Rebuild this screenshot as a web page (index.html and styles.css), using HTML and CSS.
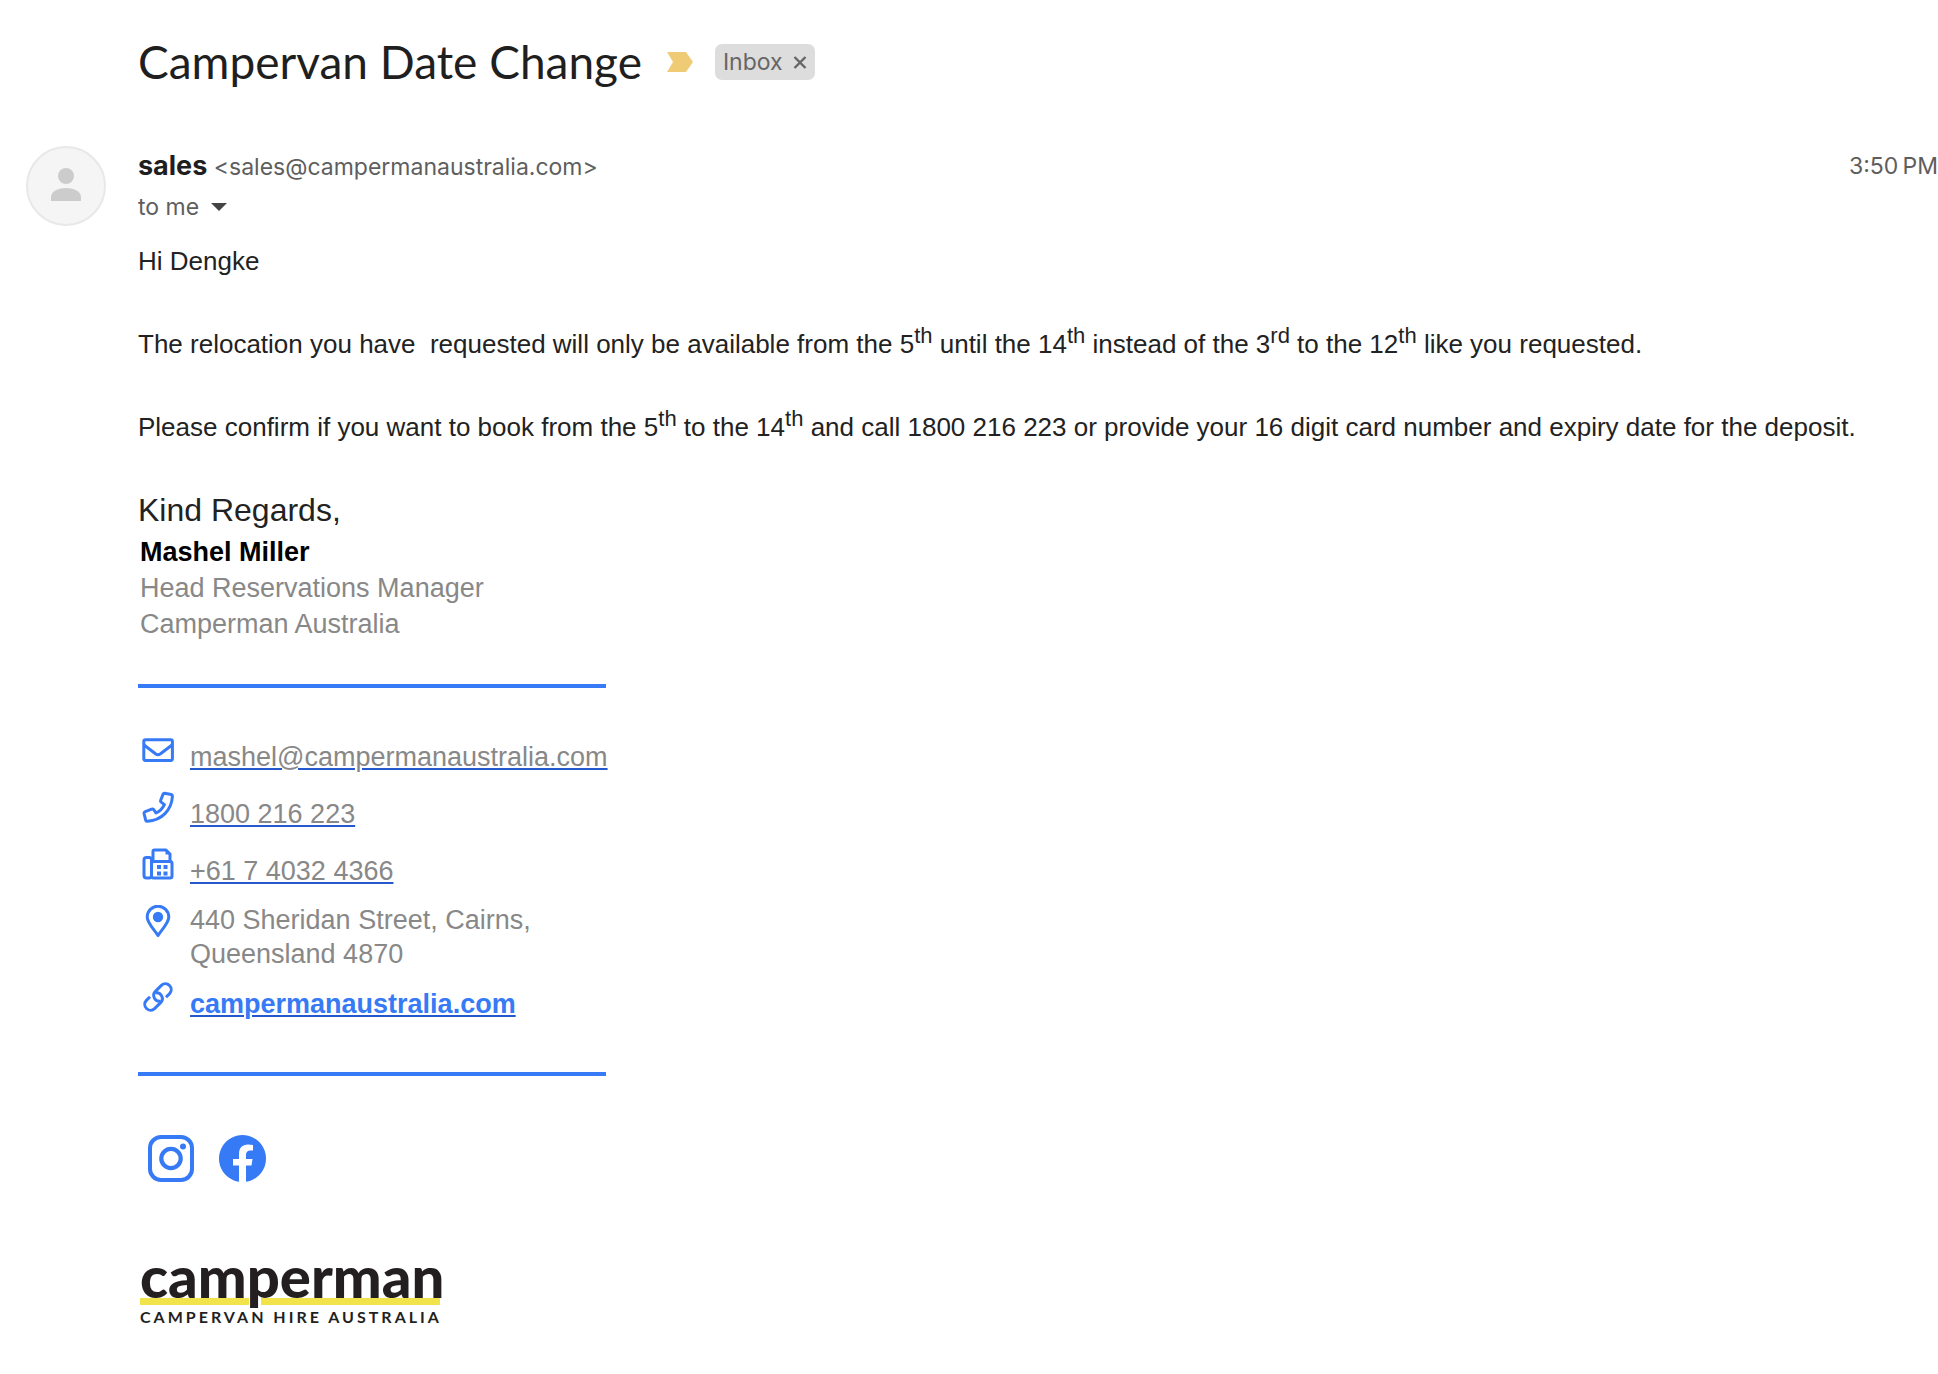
FILE: index.html
```html
<!doctype html>
<html lang="en">
<head>
    <meta charset="UTF-8">
    <meta name="viewport" content="width=device-width, initial-scale=1.0">
    <title>Campervan Date Change</title>
    <link rel="stylesheet" href="styles.css">
</head>
<body>
<header class="subject">
    <h1>Campervan Date Change</h1>
    <svg class="important" viewBox="0 0 26 20" width="26" height="20" aria-hidden="true">
        <path d="M0 0h19l7 10-7 10H0l6-10z" fill="#f0cb76"/>
    </svg>
    <span class="label">Inbox
        <button type="button" class="remove" aria-label="Remove label">
            <svg viewBox="0 0 14 14" width="14" height="14"><path d="M1.5 2l11 11M12.5 2l-11 11" stroke="#666" stroke-width="2.4"/></svg>
        </button>
    </span>
</header>
<main class="message">
    <div class="avatar">
        <svg viewBox="0 0 80 80" width="80" height="80" aria-hidden="true">
            <circle cx="40" cy="40" r="39" fill="#f5f5f5" stroke="#e8e8e8" stroke-width="2"/>
            <circle cx="40" cy="30" r="8" fill="#ccc"/>
            <path d="M25 55v-4c0-6 8-9 15-9s15 3 15 9v4z" fill="#ccc"/>
        </svg>
    </div>
    <div class="content">
        <div class="sender">
            <div class="from"><span class="name">sales</span> <span class="email">&lt;sales@campermanaustralia.com&gt;</span></div>
            <time>3:50&#8239;PM</time>
        </div>
        <div class="to">to me
            <button type="button" class="details" aria-label="Show details">
                <svg viewBox="0 0 16 8" width="16" height="8"><path d="M0 0h16L8 8z" fill="#444"/></svg>
            </button>
        </div>

        <div class="body">
            <p>Hi Dengke</p>
            <p>The relocation you have&nbsp; requested will only be available from the 5<sup>th</sup> until the 14<sup>th</sup> instead of the 3<sup>rd</sup> to the 12<sup>th</sup> like you requested.</p>
            <p>Please confirm if you want to book from the 5<sup>th</sup> to the 14<sup>th</sup> and call 1800 216 223 or provide your 16 digit card number and expiry date for the deposit.</p>
            <p class="regards">Kind Regards,</p>
        </div>

        <div class="signature">
            <div class="person">
                <strong>Mashel Miller</strong>
                <span>Head Reservations Manager</span>
                <span>Camperman Australia</span>
            </div>
            <hr>
            <ul class="contacts">
                <li>
                    <svg viewBox="0 0 32 32" width="32" height="32" class="icon">
                        <rect x="1.8" y="5.8" width="28.6" height="20.6" rx="1.6"/>
                        <path d="M2 11l11.500 8.800q2.500 1.800 5 0L30 11"/>
                    </svg>
                    <a href="mailto:mashel@campermanaustralia.com">mashel@campermanaustralia.com</a>
                </li>
                <li>
                    <svg viewBox="0 0 32 32" width="32" height="32" class="icon">
                        <path d="M22.7 2.2l6.4 1.3c1 .2 1.4.8 1.3 1.8C29.8 19 19.5 29.6 5.5 30.2c-1 .1-1.7-.3-1.9-1.3L2.1 22.6c-.2-1 .2-1.6 1.1-2l6.5-2.5c.8-.3 1.5-.1 2 .6l2.300 3.300c3.900-1.800 6.600-4.500 8.400-8.400l-3.200-2.500c-.6-.5-.8-1.100-.5-1.900l2.300-5.800c.3-.9.8-1.300 1.700-1.200z"/>
                    </svg>
                    <a href="tel:1800216223">1800 216 223</a>
                </li>
                <li>
                    <svg viewBox="0 0 32 32" width="32" height="32" class="icon">
                        <rect x="2" y="9.500" width="7.500" height="20.500" rx="2.500"/>
                        <rect x="9.500" y="13.500" width="20.500" height="16.500" rx="2"/>
                        <path d="M11 13V3.500q0-1.500 1.500-1.500H24l4 4v7.500"/>
                        <path d="M23.500 2v4.500H28z" class="solid"/>
                        <path d="M15 17h4v4h-4zM21.500 17h4v4h-4zM15 23.500h4v4h-4zM21.500 23.500h4v4h-4z" class="solid"/>
                    </svg>
                    <a href="tel:+61740324366">+61 7 4032 4366</a>
                </li>
                <li>
                    <svg viewBox="0 0 32 32" width="32" height="32" class="icon">
                        <path d="M16 30.500C14 26.500 5.200 18.500 5.200 12a10.800 10.800 0 0 1 21.600 0c0 6.500-8.800 14.500-10.800 18.500z"/>
                        <circle cx="16" cy="12" r="5.2" class="solid"/>
                    </svg>
                    <address>440 Sheridan Street, Cairns,<br>Queensland 4870</address>
                </li>
                <li>
                    <svg viewBox="0 0 32 32" width="32" height="32" class="icon">
                        <path d="M18.5 20.2A5.8 5.8 0 0 1 13.4 10.4L19.4 4.4A5.8 5.8 0 0 1 27.6 12.6L24 16.2"/>
                        <path d="M13.5 11.8A5.8 5.8 0 0 1 18.6 21.6L12.6 27.6A5.8 5.8 0 0 1 4.4 19.4L8 15.8"/>
                    </svg>
                    <a href="https://campermanaustralia.com" class="site">campermanaustralia.com</a>
                </li>
            </ul>
            <hr>
            <div class="social">
                <a href="#" aria-label="Instagram">
                    <svg viewBox="0 0 46 47" width="46" height="47">
                        <rect x="2" y="2" width="42" height="43" rx="11" fill="none" stroke="#367af6" stroke-width="4"/>
                        <circle cx="23" cy="23.5" r="9.7" fill="none" stroke="#367af6" stroke-width="4.2"/>
                        <circle cx="35" cy="11.5" r="3" fill="#367af6"/>
                    </svg>
                </a>
                <a href="#" aria-label="Facebook">
                    <svg viewBox="0 0 47 47" width="47" height="47">
                        <path d="M20 46.800A23.500 23.500 0 1 1 27 46.800V30.500h5.500l1-6.500H27v-4c0-3 1.500-4.500 4.200-4.500H34V10c-1.500-.4-3-.6-5-.6-5.800 0-9 3.400-9 9.600v5h-6v6.500h6z" fill="#367af6"/>
                    </svg>
                </a>
            </div>
            <div class="logo">
                <div class="wordmark">camperman</div>
                <div class="stripe"><i></i><i></i></div>
                <div class="tagline">CAMPERVAN HIRE AUSTRALIA</div>
            </div>
        </div>
    </div>
</main>
</body>
</html>
```
FILE: styles.css
```css
body {
    margin: 0;
    background: #fff;
    color: #222;
    font-family: "Liberation Sans", Arial, sans-serif;
    font-size: 26px;
}

button {
    border: none;
    background: none;
    padding: 0;
    cursor: pointer;
}

svg {
    display: block;
    flex-shrink: 0;
}

/* Subject line */
.subject {
    display: flex;
    align-items: center;
    padding: 34px 0 0 138px;
    font-family: Inter, sans-serif;
}

.subject h1 {
    margin: 0;
    font-family: Lato, sans-serif;
    font-size: 46px;
    line-height: 56px;
    font-weight: normal;
    color: #1f1f1f;
}

.important {
    margin: 0 22px 0 25px;
}

.label {
    display: flex;
    align-items: center;
    gap: 10px;
    padding: 0 8px;
    border-radius: 7px;
    background: #ddd;
    color: #666;
    font-size: 23px;
    line-height: 36px;
}

/* Message */
.message {
    display: grid;
    grid-template-columns: 138px 1fr;
    padding-top: 56px;
}

.avatar {
    padding-left: 26px;
}

.sender {
    display: flex;
    justify-content: space-between;
    padding-top: 4px;
}

.sender, .to {
    font-family: Inter, sans-serif;
    font-size: 23px;
    line-height: 32px;
    color: #5e5e5e;
}

.name {
    color: #1f1f1f;
    font-size: 27px;
    font-weight: bold;
}

.to {
    display: flex;
    align-items: center;
    gap: 12px;
    margin-top: 8px;
}

.body {
    padding-top: 18px;
}

.body p {
    margin: 0 0 43px;
    line-height: 40px;
}

.body sup {
    font-size: 22px;
    line-height: 0;
}

.body .regards {
    margin: 0 0 4px;
    font-size: 32px;
}

/* Signature */
.signature {
    width: 468px;
    color: #888;
    font-size: 27px;
}

.person {
    display: flex;
    flex-direction: column;
    padding: 0 0 6px 2px;
    line-height: 36px;
}

.person strong {
    color: #000;
}

.signature hr {
    height: 4px;
    margin: 36px 0 44px;
    border: none;
    background: #367af6;
}

.contacts {
    list-style: none;
    margin: 0;
    padding: 0;
    line-height: 34px;
}

.contacts li {
    display: flex;
    gap: 16px;
    padding-left: 4px;
}

.contacts a {
    padding: 8px 0 15px;
    color: #888;
    text-decoration: underline #2558cc 2px;
    text-underline-offset: 2px;
}

.contacts .site {
    color: #367af6;
    font-weight: bold;
}

.contacts address {
    padding-bottom: 8px;
    font-style: normal;
}

.icon {
    margin-top: 2px;
    fill: none;
    stroke: #367af6;
    stroke-width: 3;
    stroke-linejoin: round;
}

.icon .solid {
    fill: #367af6;
    stroke: none;
}

.social {
    display: flex;
    gap: 25px;
    padding: 15px 0 0 10px;
}

.logo {
    width: 300px;
    margin-left: 2px;
    padding-top: 62px;
    color: #231f20;
}

.wordmark {
    position: relative;
    z-index: 1;
    height: 54px;
    font-family: Lato, sans-serif;
    font-size: 58px;
    line-height: 64px;
    font-weight: 900;
}

.stripe {
    display: grid;
    grid-template-columns: 109px 1fr;
    gap: 12px;
}

.stripe i {
    height: 7px;
    background: #f2e34c;
}

.tagline {
    font-family: Lato, sans-serif;
    font-size: 16px;
    line-height: 24px;
    font-weight: bold;
    letter-spacing: 3px;
    white-space: nowrap;
}
```
